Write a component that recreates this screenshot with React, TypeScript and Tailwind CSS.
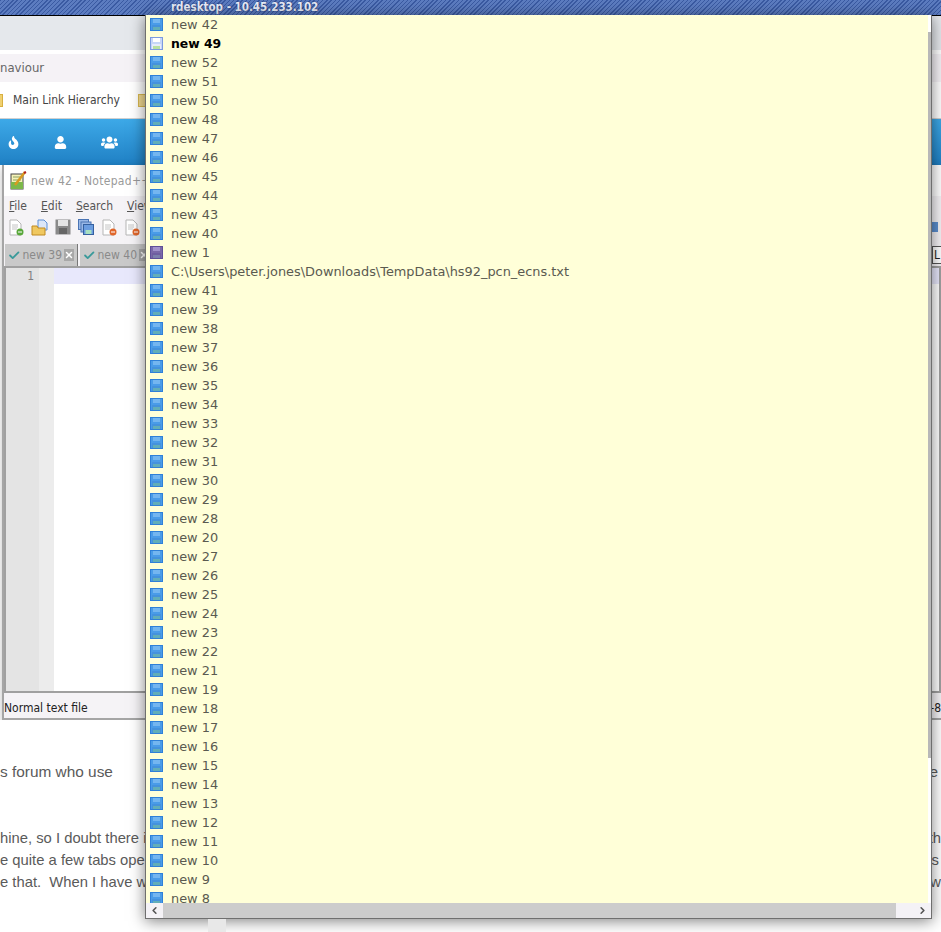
import { Check, ChevronLeft, ChevronRight, X } from "lucide-react"
import { FaFire, FaUser, FaUsers } from "react-icons/fa"

const files = [
  "new 42", "new 49", "new 52", "new 51", "new 50", "new 48", "new 47", "new 46", "new 45", "new 44",
  "new 43", "new 40", "new 1", "C:\\Users\\peter.jones\\Downloads\\TempData\\hs92_pcn_ecns.txt", "new 41",
  "new 39", "new 38", "new 37", "new 36", "new 35", "new 34", "new 33", "new 32", "new 31", "new 30",
  "new 29", "new 28", "new 20", "new 27", "new 26", "new 25", "new 24", "new 23", "new 22", "new 21",
  "new 19", "new 18", "new 17", "new 16", "new 15", "new 14", "new 13", "new 12", "new 11", "new 10",
  "new 9", "new 8",
]

function Floppy({ name }: { name: string }) {
  let edge = "#2f80d8"
  let body = "#4a9ce8"
  let label = "#74b6f0"
  let lower = "#4592dc"
  let foot = "#62aeb8"
  if (name === "new 49") {
    edge = "#7c9ae0"
    body = "#c6d6f8"
    label = "#ffffff"
    lower = "#e6ecfb"
    foot = "#b8e0a0"
  }
  if (name === "new 1") {
    edge = "#5f4f98"
    body = "#7a68a8"
    label = "#a292cc"
    lower = "#6f5ea0"
    foot = "#7c80ac"
  }
  return (
    <svg width="13" height="13" viewBox="0 0 13 13" className="shrink-0">
      <rect width="13" height="13" fill={edge} />
      <rect x="1" y="1" width="11" height="11" fill={body} />
      <rect x="3" y="1" width="7" height="4" fill={label} />
      <rect x="2" y="7" width="9" height="5" fill={lower} />
      <rect x="3" y="9" width="7" height="3" fill={foot} />
    </svg>
  )
}

function DocIcon({ badge }: { badge: string }) {
  return (
    <svg width="16" height="17" viewBox="0 0 16 17">
      <path d="M2 1h7l4 4v11H2z" fill="#fff" stroke="#b5b5b5" />
      <path d="M4 6h6M4 8h6M4 10h5" stroke="#c4c4c4" />
      <circle cx="12" cy="13" r="3.5" fill={badge} />
      <path d="M10 13h4" stroke="#fff" />
    </svg>
  )
}

function Toolbar() {
  return (
    <div className="flex items-center gap-[7px] pl-[4px] h-[24px]">
      <DocIcon badge="#5aa83c" />
      <svg width="17" height="17" viewBox="0 0 17 17">
        <path d="M7 1h6l3 3v7H7z" fill="#dbe6f8" stroke="#5c8fd6" />
        <path d="M1 7h5l1 2h7v7H1z" fill="#f0c860" stroke="#c08a20" />
      </svg>
      <svg width="16" height="16" viewBox="0 0 16 16">
        <rect x="0.5" y="0.5" width="15" height="15" fill="#8a8a8a" />
        <rect x="3" y="1" width="10" height="6" fill="#e4e4e4" />
        <rect x="4" y="9" width="8" height="6" fill="#666666" />
      </svg>
      <svg width="16" height="16" viewBox="0 0 16 16">
        <rect x="0.5" y="0.5" width="10" height="10" fill="#9ab8e6" stroke="#4a74b4" />
        <rect x="3" y="3" width="10" height="10" fill="#9ab8e6" stroke="#4a74b4" />
        <rect x="5.5" y="5.5" width="10" height="10" fill="#6a9ce0" stroke="#35609f" />
        <rect x="7.5" y="11" width="6" height="4" fill="#a8e0c0" />
      </svg>
      <DocIcon badge="#e0662a" />
      <DocIcon badge="#e0662a" />
      <div className="ml-auto mr-[3px] w-[6px] h-[10px] bg-[#5b8fd0]" />
    </div>
  )
}

function Tab({ title }: { title: string }) {
  return (
    <div className="flex items-center gap-[2px] w-[73px] mr-[2px] h-[22px] pl-[3px] bg-[#c9c9c9] border-r border-[#777777]">
      <Check size={17} strokeWidth={3.5} className="text-[#3a9a9a]" />
      <span className="text-[#8a8a8a] text-[12px] whitespace-nowrap font-['DejaVu_Sans_Condensed','DejaVu_Sans',sans-serif]">{title}</span>
      <span className="flex items-center justify-center w-[12px] h-[12px] bg-[#a8a8a8] ml-auto mr-[3px]">
        <X size={10} strokeWidth={3.5} className="text-white" />
      </span>
    </div>
  )
}

function NotepadWindow() {
  return (
    <div className="ml-[2px] h-[555px] flex flex-col bg-[#f5f3f6] border-l-2 border-b-2 border-[#a5a5a5] font-['DejaVu_Sans_Condensed','DejaVu_Sans',sans-serif] shadow-[0_3px_8px_rgba(0,0,0,0.25)]">
      <div className="flex items-center h-[31px] pl-[6px] gap-[4px] bg-white shrink-0">
        <svg width="17" height="19" viewBox="0 0 17 19">
          <rect x="1" y="3" width="12" height="15" fill="#f6f2b8" stroke="#444444" />
          <path d="M3 6h8M3 9h8" stroke="#8aa060" />
          <rect x="1" y="11" width="12" height="7" fill="#7cb84a" />
          <path d="M5 14L15 1" stroke="#d89a20" strokeWidth="2.5" />
          <path d="M14 2l2-1" stroke="#b02020" strokeWidth="2" />
        </svg>
        <span className="text-[12px] text-[#9a9a9a] tracking-[0.3px]">new 42 - Notepad++</span>
      </div>
      <div className="flex gap-[14px] items-center h-[19px] pl-[5px] text-[12px] text-[#555555] shrink-0">
        <span><u>F</u>ile</span>
        <span><u>E</u>dit</span>
        <span><u>S</u>earch</span>
        <span><u>V</u>iew</span>
      </div>
      <Toolbar />
      <div className="flex items-end h-[27px] pl-[1px] shrink-0">
        <Tab title="new 39" />
        <Tab title="new 40" />
        <div className="ml-auto w-[9px] h-[18px] mb-[2px] border-y border-l border-[#555555] bg-white text-[12px] leading-[16px] text-[#222222] pl-[1px]">
          L
        </div>
      </div>
      <div className="flex flex-1 border-2 border-[#a0a0a0] bg-white">
        <div className="w-[48px] bg-[#e4e4e4] flex shrink-0">
          <div className="w-[28px] text-right text-[12px] text-[#808080] leading-[16px]">1</div>
          <div className="w-[15px] ml-auto bg-[#ececec]" />
        </div>
        <div className="flex-1 h-[16px] bg-[#e8e8fc]" />
      </div>
      <div className="flex items-center justify-between h-[25px] pt-[4px] text-[12px] text-[#222222] shrink-0">
        <span>Normal text file</span>
        <span>-8</span>
      </div>
    </div>
  )
}

function ForumText() {
  return (
    <div className="flex-1 bg-white text-[14.8px] text-[#5a5a5a] font-['Liberation_Sans',sans-serif] overflow-hidden">
      <div className="flex justify-between items-center h-[18px] mt-[43px] text-[15.4px]">
        <span>s forum who use</span>
        <span className="mr-[3px]">e</span>
      </div>
      <div className="flex justify-between items-center h-[22px] mt-[46px]">
        <span className="whitespace-nowrap">hine, so I doubt there is</span>
        <span>th</span>
      </div>
      <div className="flex justify-between items-center h-[22px]">
        <span className="whitespace-nowrap">e quite a few tabs open</span>
        <span className="mr-[2px]">s</span>
      </div>
      <div className="flex justify-between items-center h-[22px]">
        <span className="whitespace-nowrap">e that.&nbsp; When I have w</span>
        <span>w</span>
      </div>
    </div>
  )
}

function FileListPopup() {
  return (
    <div className="absolute top-[15px] left-[145px] w-[787px] h-[904px] flex flex-col bg-[#ffffd8] border-l border-r border-b border-[#6f6f6f] shadow-[0_2px_14px_rgba(0,0,0,0.5)] font-['DejaVu_Sans',sans-serif]">
      <div className="flex flex-1 min-h-0">
        <div className="flex-1 min-w-0 overflow-hidden">
          {files.map((name, i) => (
            <div key={i} className="flex items-center h-[19px] pl-[4px] gap-[8px]">
              <Floppy name={name} />
              <span
                className={
                  name === "new 49"
                    ? "text-[12.4px] leading-[20px] pt-px font-bold text-black whitespace-nowrap"
                    : "text-[12.9px] text-[#5a5a50] whitespace-nowrap"
                }
              >
                {name}
              </span>
            </div>
          ))}
        </div>
        <div className="w-[3px] flex flex-col bg-white shrink-0">
          <div className="h-[17px] shrink-0" />
          <div className="h-[726px] bg-[#b8b8b8] shrink-0" />
        </div>
      </div>
      <div className="flex h-[15px] shrink-0">
        <div className="flex items-center justify-center w-[17px] bg-[#f4f2f6]">
          <ChevronLeft size={11} strokeWidth={3.5} className="text-[#555555]" />
        </div>
        <div className="flex-1 bg-[#cccccc]" />
        <div className="flex items-center justify-end w-[35px] pr-[3px] bg-[#f4f2f6]">
          <ChevronRight size={11} strokeWidth={3.5} className="text-[#555555]" />
        </div>
      </div>
    </div>
  )
}

export default function App() {
  return (
    <div className="relative w-[941px] h-[932px] overflow-hidden flex flex-col bg-white">
      {/* rdesktop title bar */}
      <div className="h-[16px] shrink-0 border-b border-black bg-[repeating-linear-gradient(135deg,#3a5aa2_0,#3a5aa2_1px,#5c7cc0_1px,#5c7cc0_3px)] pl-[171px] text-[11.5px] leading-[14px] font-bold text-[#e8ecf8] font-['DejaVu_Sans_Condensed','DejaVu_Sans',sans-serif] [text-shadow:0_0_2px_#1a2a60]">
        rdesktop - 10.45.233.102
      </div>

      {/* browser behind the popup */}
      <div className="h-[34px] shrink-0 bg-[#e5e8ec]" />
      <div className="h-[4px] shrink-0 bg-white" />
      <div className="flex items-center h-[28px] shrink-0 bg-[#f5f2f6] text-[13px] text-[#666666] font-['DejaVu_Sans_Condensed','DejaVu_Sans',sans-serif] overflow-hidden">
        <span>naviour</span>
      </div>
      <div className="flex items-center h-[36px] shrink-0 bg-white font-['DejaVu_Sans_Condensed','DejaVu_Sans',sans-serif] text-[12px] text-[#444444]">
        <div className="w-[3px] h-[13px] bg-[#f0d070] border-y border-r border-[#d8b040]" />
        <span className="ml-[10px]">Main Link Hierarchy</span>
        <div className="ml-[18px] w-[10px] h-[13px] bg-[#f0d890] border border-[#d8b850]" />
      </div>
      <div className="flex items-center h-[47px] shrink-0 pl-[7px] gap-[34px] text-white border-t border-[#d0d0d0] bg-gradient-to-b from-[#3da9e8] to-[#1f80c4]">
        <FaFire size={13} />
        <FaUser size={13} />
        <FaUsers size={17} />
      </div>

      <NotepadWindow />
      <ForumText />

      <FileListPopup />
      <div className="absolute left-[208px] top-[919px] w-[18px] h-[13px] bg-[#e8e8e8]" />
    </div>
  )
}
